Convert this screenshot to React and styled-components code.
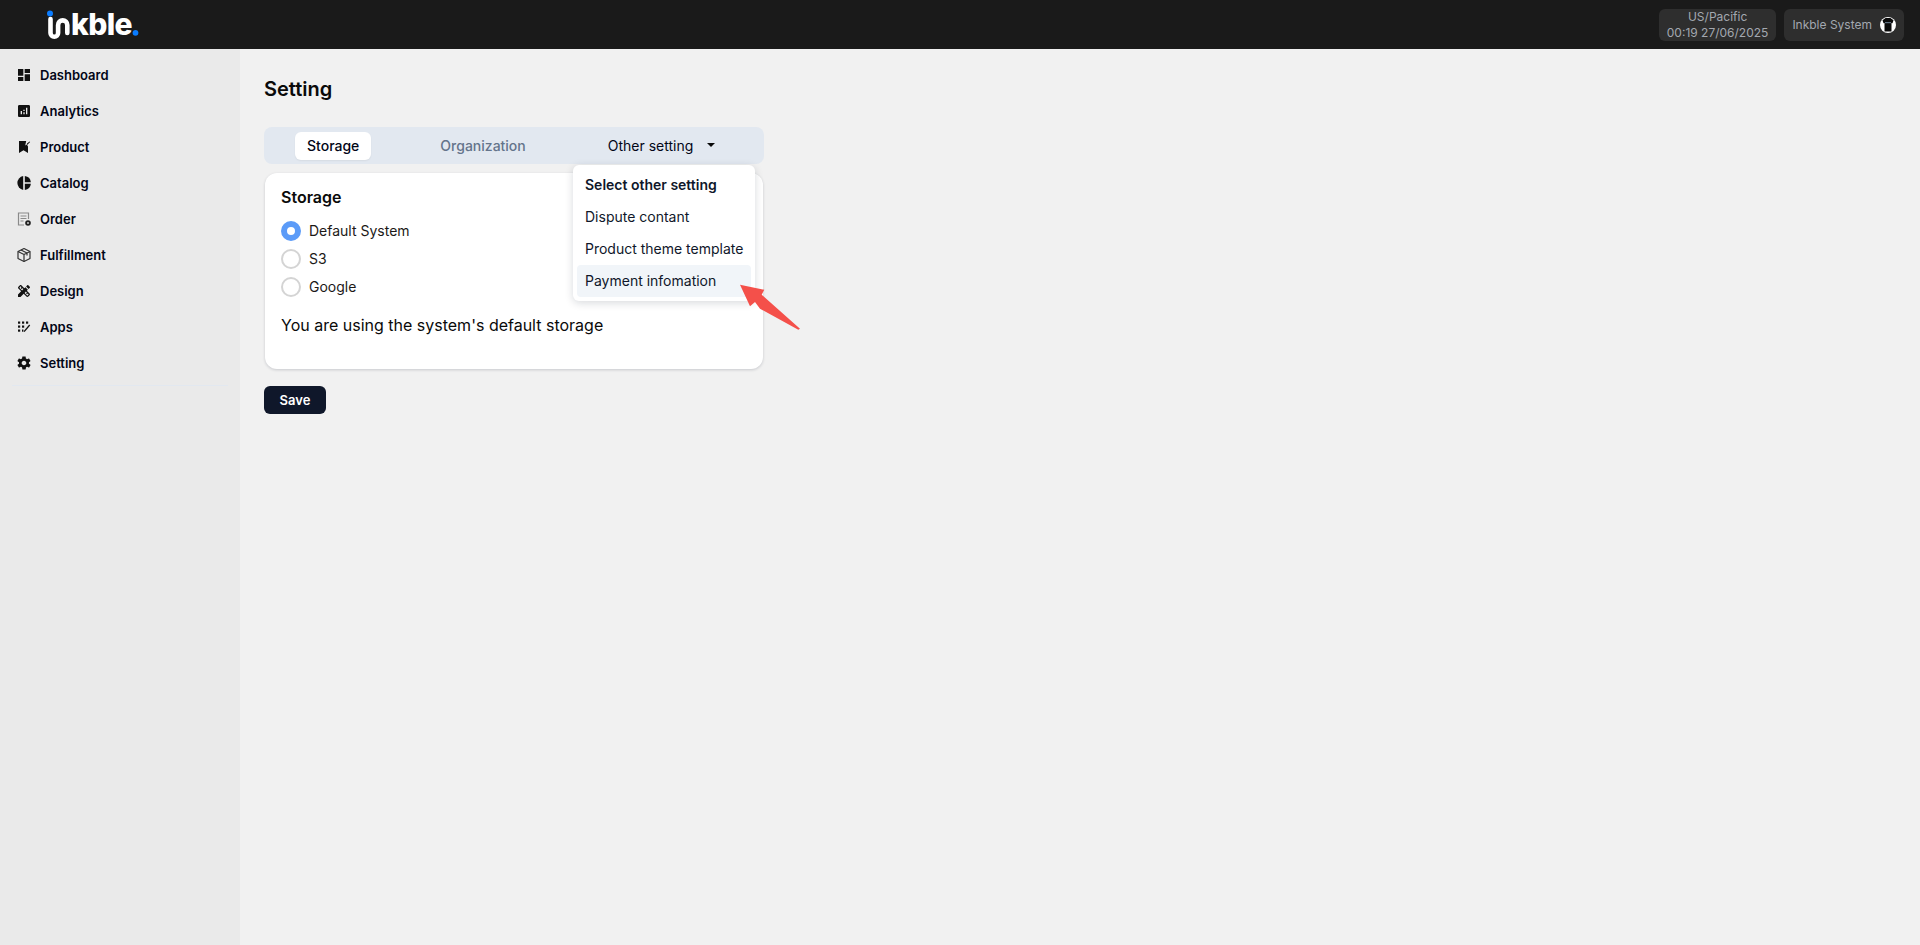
import React from "react";
import styled, { createGlobalStyle } from "styled-components";
import { MdDashboard, MdAnalytics, MdDesignServices } from "react-icons/md";
import { IoMdSettings } from "react-icons/io";

const GlobalStyle = createGlobalStyle`
  html, body {
    margin: 0;
    padding: 0;
    height: 100%;
    background: #f1f1f1;
    font-family: Inter, "Liberation Sans", sans-serif;
    color: #020617;
  }
  * { box-sizing: border-box; }
`;

const Page = styled.div`
  height: 945px;
  display: flex;
  flex-direction: column;
  overflow: hidden;
`;

const Header = styled.header`
  height: 49px;
  flex: none;
  background: #1a1a1a;
  display: flex;
  align-items: center;
  justify-content: space-between;
  padding: 0 16px 0 46px;
`;

const LogoSvg = styled.svg`
  width: 94px;
  height: 40px;
  display: block;
  margin-top: 2px;
`;

const HeaderRight = styled.div`
  display: flex;
  gap: 8px;
`;

const Pill = styled.div`
  height: 32px;
  background: #2e2e2e;
  border-radius: 6px;
  color: #a3a8b0;
  font-size: 12px;
  line-height: 16px;
  text-align: center;
  padding: 0 8px;
  display: flex;
  flex-direction: column;
  justify-content: center;
`;

const UserPill = styled(Pill)`
  flex-direction: row;
  align-items: center;
  gap: 8px;
`;

const Avatar = styled.svg`
  width: 16px;
  height: 16px;
  display: block;
`;

const Body = styled.div`
  flex: 1;
  display: flex;
  min-height: 0;
`;

const Sidebar = styled.aside`
  width: 240px;
  flex: none;
  background: #eaeaea;
  padding: 8px 12px 0;
`;

const NavList = styled.nav`
  display: flex;
  flex-direction: column;
  padding-bottom: 4px;
  border-bottom: 1px solid #e2e8f0;
`;

const NavItem = styled.a`
  height: 36px;
  display: flex;
  align-items: center;
  gap: 8px;
  padding-left: 4px;
  font-size: 13px;
  font-weight: 600;
  color: #020617;

  svg {
    width: 16px;
    height: 16px;
    flex: none;
    color: #111;
  }
`;

const Main = styled.main`
  flex: 1;
  padding: 26px 24px;
  min-width: 0;
`;

const Title = styled.h1`
  margin: 0 0 24px;
  font-size: 20px;
  line-height: 28px;
  font-weight: 600;
  color: #0a0a0a;
`;

const Content = styled.div`
  width: 500px;
  position: relative;
`;

const TabBar = styled.div`
  height: 37px;
  background: #e2e8f0;
  border-radius: 8px;
  display: flex;
  gap: 57px;
  align-items: center;
  padding: 0 0 0 31px;
  margin-bottom: 9px;
`;

const Tab = styled.div`
  height: 28px;
  padding: 0 12px 1px;
  display: flex;
  align-items: center;
  gap: 12px;
  border-radius: 6px;
  font-size: 14px;
  font-weight: ${(p) => (p.$active ? 500 : 400)};
  color: ${(p) => p.$color || "#020617"};
  background: ${(p) => (p.$active ? "#fff" : "transparent")};
  box-shadow: ${(p) => (p.$active ? "0 1px 2px rgba(0,0,0,.06)" : "none")};
`;

const OrgTab = styled(Tab)`
  font-weight: 500;
`;

const OtherTab = styled(Tab)`
  margin-left: 1px;
`;

const Caret = styled.span`
  width: 0;
  height: 0;
  border-left: 4px solid transparent;
  border-right: 4px solid transparent;
  border-top: 4px solid #0a0a0a;
  margin-left: 2px;
`;

const Card = styled.section`
  margin: 0 1px;
  height: 196px;
  background: #fff;
  border-radius: 12px;
  box-shadow: 0 1px 3px rgba(15, 23, 42, 0.18);
  padding: 14px 16px;
`;

const CardTitle = styled.h2`
  margin: 0 0 14px;
  font-size: 16px;
  line-height: 20px;
  font-weight: 600;
  color: #0a0a0a;
`;

const RadioGroup = styled.div`
  display: flex;
  flex-direction: column;
  gap: 8px;
`;

const RadioRow = styled.label`
  height: 20px;
  display: flex;
  align-items: center;
  gap: 8px;
  font-size: 14px;
  color: #1c1917;
`;

const RadioText = styled.span`
  margin-top: -2px;
`;

const RadioDot = styled.span`
  width: 20px;
  height: 20px;
  border-radius: 50%;
  background: ${(p) => (p.$checked ? "#fff" : "transparent")};
  border: ${(p) => (p.$checked ? "6px solid #5b9bf8" : "2px solid #d4d4d4")};
`;

const Desc = styled.p`
  margin: 16px 0 0;
  font-size: 16px;
  line-height: 24px;
  color: #0a0a0a;
`;

const SaveButton = styled.button`
  display: block;
  margin-top: 17px;
  width: 62px;
  height: 28px;
  border: 0;
  border-radius: 6px;
  background: #0f172a;
  color: #fff;
  font: 600 13px Inter, sans-serif;
`;

const Menu = styled.div`
  position: absolute;
  left: 309px;
  top: 38px;
  width: 182px;
  height: 136px;
  padding: 4px;
  background: #fff;
  border-radius: 6px;
  box-shadow: 0 2px 8px rgba(15, 23, 42, 0.16);
`;

const MenuItem = styled.div`
  height: 32px;
  display: flex;
  align-items: center;
  padding: 0 8px 1px;
  border-radius: 4px;
  font-size: 14px;
  white-space: nowrap;
  font-weight: ${(p) => (p.$heading ? 600 : 400)};
  color: #0f172a;
  background: ${(p) => (p.$active ? "#f1f5f9" : "transparent")};
`;

const Arrow = styled.svg`
  position: absolute;
  left: 474px;
  top: 157px;
  width: 70px;
  height: 60px;
`;

const CatalogIcon = () => (
  <svg viewBox="-1 -1 16 16" fill="currentColor">
    <path d="M6.200 0.100v13.800A7 7 0 0 1 6.200 0.100z" />
    <path d="M7.800 0.100A7 7 0 0 1 13.900 6.200H7.800z" />
    <path d="M7.800 7.800h6.100A7 7 0 0 1 7.800 13.900z" />
  </svg>
);

const ProductIcon = () => (
  <svg viewBox="-1 -1 16 16" fill="currentColor">
    <path d="M2 1h7.200l-1 4.400 1.600-1L11 6.400V13L6.500 10.300 2 13z" />
    <path d="M10 3.600l2.600-2.200.5.600-3 3z" />
  </svg>
);

const OrderIcon = () => (
  <svg viewBox="-1 -1 16 16" fill="none">
    <path d="M7 13H1.500V1h10v6" stroke="#8a8a8a" strokeWidth="1.2" />
    <path d="M3.500 4h6M3.500 6.500h6M3.500 9h3" stroke="#8a8a8a" strokeWidth="1.1" />
    <circle cx="11" cy="11" r="2.800" fill="#222" />
    <circle cx="11" cy="11" r="0.900" fill="#ddd" />
  </svg>
);

const PackageIcon = () => (
  <svg viewBox="-1 -1 16 16" fill="none" stroke="#333" strokeWidth="1.2" strokeLinejoin="round">
    <path d="M7 0.500L13 3.500V10.500L7 13.500 1 10.500V3.500z" />
    <path d="M1 3.500L7 6.500 13 3.500M7 6.500V13.500M4 2L10 5V7.500" />
  </svg>
);

const AppsIcon = () => (
  <svg viewBox="-1 -1 16 16" fill="currentColor">
    <rect x="1" y="1.500" width="2.200" height="2.200" />
    <rect x="5" y="1.500" width="2.200" height="2.200" />
    <rect x="9" y="1.500" width="2.200" height="2.200" />
    <rect x="1" y="5.500" width="2.200" height="2.200" />
    <rect x="5" y="5.500" width="2.200" height="2.200" />
    <rect x="1" y="9.500" width="2.200" height="2.200" />
    <rect x="5" y="9.500" width="1.400" height="2.200" />
    <path d="M12.200 4.600l1 1-5.600 6.400-1-.8z" />
  </svg>
);

const navItems = [
  { label: "Dashboard", icon: <MdDashboard /> },
  { label: "Analytics", icon: <MdAnalytics /> },
  { label: "Product", icon: <ProductIcon /> },
  { label: "Catalog", icon: <CatalogIcon /> },
  { label: "Order", icon: <OrderIcon /> },
  { label: "Fulfillment", icon: <PackageIcon /> },
  { label: "Design", icon: <MdDesignServices /> },
  { label: "Apps", icon: <AppsIcon /> },
  { label: "Setting", icon: <IoMdSettings /> },
];

const radios = ["Default System", "S3", "Google"];
const menuItems = ["Dispute contant", "Product theme template"];

function Logo() {
  return (
    <LogoSvg viewBox="0 -4 94 40">
      <path
        d="M4.500 9v14a3.800 3.800 0 0 0 7.600 0V15a4.600 4.600 0 0 1 9.200 0v8"
        fill="none"
        stroke="#fff"
        strokeWidth="4.600"
        strokeLinecap="round"
      />
      <circle cx="4" cy="3.500" r="3" fill="#0a7cff" />
      <text
        x="25"
        y="25"
        fontFamily="Inter, sans-serif"
        fontWeight="800"
        fontSize="30"
        letterSpacing="-0.6"
        fill="#fff"
      >
        kble
      </text>
      <circle cx="89.500" cy="22.800" r="2.900" fill="#0a7cff" />
    </LogoSvg>
  );
}

export default function App() {
  return (
    <Page>
      <GlobalStyle />
      <Header>
        <Logo />
        <HeaderRight>
          <Pill>
            <span>US/Pacific</span>
            <span>00:19 27/06/2025</span>
          </Pill>
          <UserPill>
            <span>Inkble System</span>
            <Avatar viewBox="0 0 16 16">
              <circle cx="8" cy="8" r="8" fill="#fff" />
              <path d="M5.500 1h5L13.500 3.200 12.500 6.200 11.500 6V14.500H4.500V6L3.500 6.200 2.500 3.200z" fill="#0a0a0a" />
              <rect x="5" y="5" width="6" height="1.200" fill="#5f7080" />
            </Avatar>
          </UserPill>
        </HeaderRight>
      </Header>
      <Body>
        <Sidebar>
          <NavList>
            {navItems.map((item) => (
              <NavItem key={item.label}>
                {item.icon}
                {item.label}
              </NavItem>
            ))}
          </NavList>
        </Sidebar>
        <Main>
          <Title>Setting</Title>
          <Content>
            <TabBar>
              <Tab $active>Storage</Tab>
              <OrgTab $color="#64748b">Organization</OrgTab>
              <OtherTab>
                Other setting <Caret />
              </OtherTab>
            </TabBar>
            <Card>
              <CardTitle>Storage</CardTitle>
              <RadioGroup>
                {radios.map((label, i) => (
                  <RadioRow key={label}>
                    <RadioDot $checked={i === 0} />
                    <RadioText>{label}</RadioText>
                  </RadioRow>
                ))}
              </RadioGroup>
              <Desc>You are using the system's default storage</Desc>
            </Card>
            <SaveButton>Save</SaveButton>
            <Menu>
              <MenuItem $heading>Select other setting</MenuItem>
              {menuItems.map((label) => (
                <MenuItem key={label}>{label}</MenuItem>
              ))}
              <MenuItem $active>Payment infomation</MenuItem>
            </Menu>
            <Arrow viewBox="0 0 70 60">
              <path d="M2 0.700L26.300 5.700 23.700 10.700 62 44.700 60.300 45.700 22 24.700 17 18 12 22.300z" fill="#f4504a" />
            </Arrow>
          </Content>
        </Main>
      </Body>
    </Page>
  );
}
